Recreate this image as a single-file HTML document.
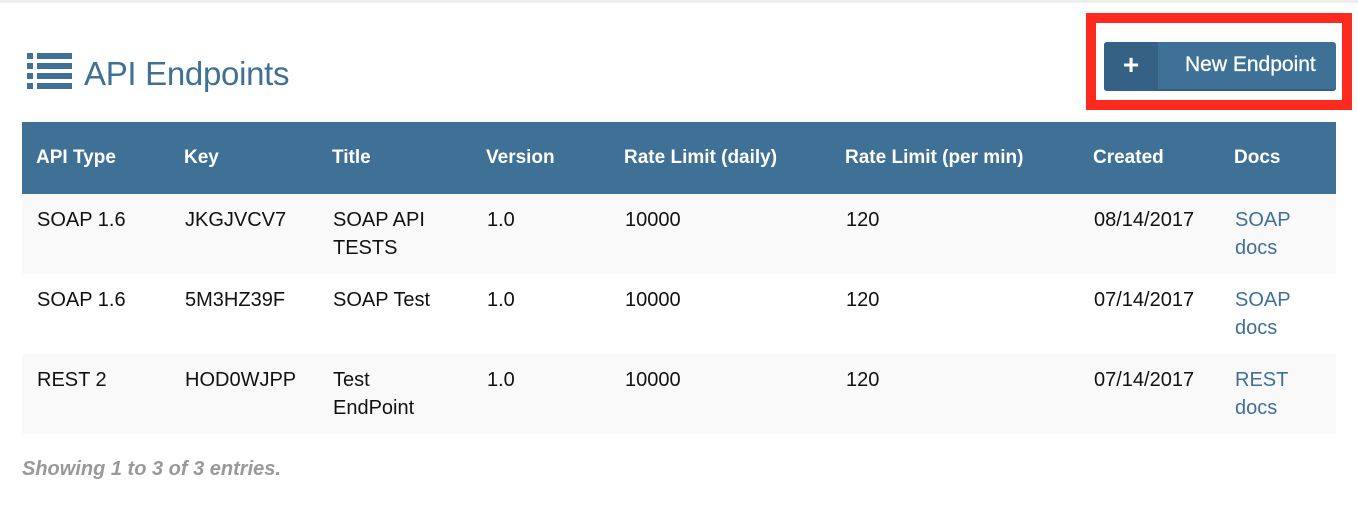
<!DOCTYPE html>
<html><head><style>
body{margin:0;width:1358px;height:510px;background:#fff;font-family:"Liberation Sans",sans-serif;position:relative;overflow:hidden}
.top{position:absolute;left:0;top:0;width:1358px;height:3px;background:#eee}
h1{position:absolute;left:84px;top:55px;margin:0;font-weight:normal;font-size:33px;color:#3f7096;letter-spacing:-0.3px}
.ic{position:absolute;left:27px;top:53px}
.red{position:absolute;left:1086px;top:13px;width:246px;height:77px;border:10px solid #fe2a1f}
.btn{position:absolute;left:1104px;top:42px;width:232px;height:49px;background:#3f7096;border-radius:3px;color:#fff;font-size:21px;box-shadow:inset 0 -2px 0 #356185}
.btn .pl{position:absolute;left:0;top:0;width:54px;height:49px;background:#356185;border-radius:3px 0 0 3px;text-align:center;line-height:46px;font-size:28px;font-weight:bold}
.btn .t{position:absolute;left:81px;top:11px;-webkit-text-stroke:0.3px #fff}
table{position:absolute;left:22px;top:122px;width:1314px;border-collapse:collapse;font-size:20px;color:#111}
th{background:#3f7096;color:#fff;text-align:left;height:72px;font-size:19px;padding:0 0 0 14px;font-weight:bold}
td{vertical-align:top;padding:12px 0 0 15px;height:68px;line-height:28px}
tr.g td{background:#f9f9f9}
a{color:#3f7096;text-decoration:none}
.f{position:absolute;left:22px;top:458px;font-size:20px;font-style:italic;font-weight:bold;color:#999}
</style></head><body>
<div class="top"></div>
<svg class="ic" width="45" height="36" viewBox="0 0 45 36" fill="#3f7096">
<rect x="0" y="0" width="6" height="6"/><rect x="10" y="0" width="35" height="6"/>
<rect x="0" y="10" width="6" height="6"/><rect x="10" y="10" width="35" height="6"/>
<rect x="0" y="20" width="6" height="6"/><rect x="10" y="20" width="35" height="6"/>
<rect x="0" y="30" width="6" height="6"/><rect x="10" y="30" width="35" height="6"/>
</svg>
<h1>API Endpoints</h1>
<div class="red"></div>
<div class="btn"><div class="pl">+</div><div class="t">New Endpoint</div></div>
<table>
<colgroup><col style="width:148px"><col style="width:148px"><col style="width:154px"><col style="width:138px"><col style="width:221px"><col style="width:248px"><col style="width:141px"><col></colgroup>
<tr><th>API Type</th><th>Key</th><th>Title</th><th>Version</th><th>Rate Limit (daily)</th><th>Rate Limit (per min)</th><th>Created</th><th>Docs</th></tr>
<tr class="g"><td>SOAP 1.6</td><td>JKGJVCV7</td><td>SOAP API<br>TESTS</td><td>1.0</td><td>10000</td><td>120</td><td>08/14/2017</td><td><a>SOAP<br>docs</a></td></tr>
<tr><td>SOAP 1.6</td><td>5M3HZ39F</td><td>SOAP Test</td><td>1.0</td><td>10000</td><td>120</td><td>07/14/2017</td><td><a>SOAP<br>docs</a></td></tr>
<tr class="g"><td>REST 2</td><td>HOD0WJPP</td><td>Test<br>EndPoint</td><td>1.0</td><td>10000</td><td>120</td><td>07/14/2017</td><td><a>REST<br>docs</a></td></tr>
</table>
<div class="f">Showing 1 to 3 of 3 entries.</div>
</body></html>
